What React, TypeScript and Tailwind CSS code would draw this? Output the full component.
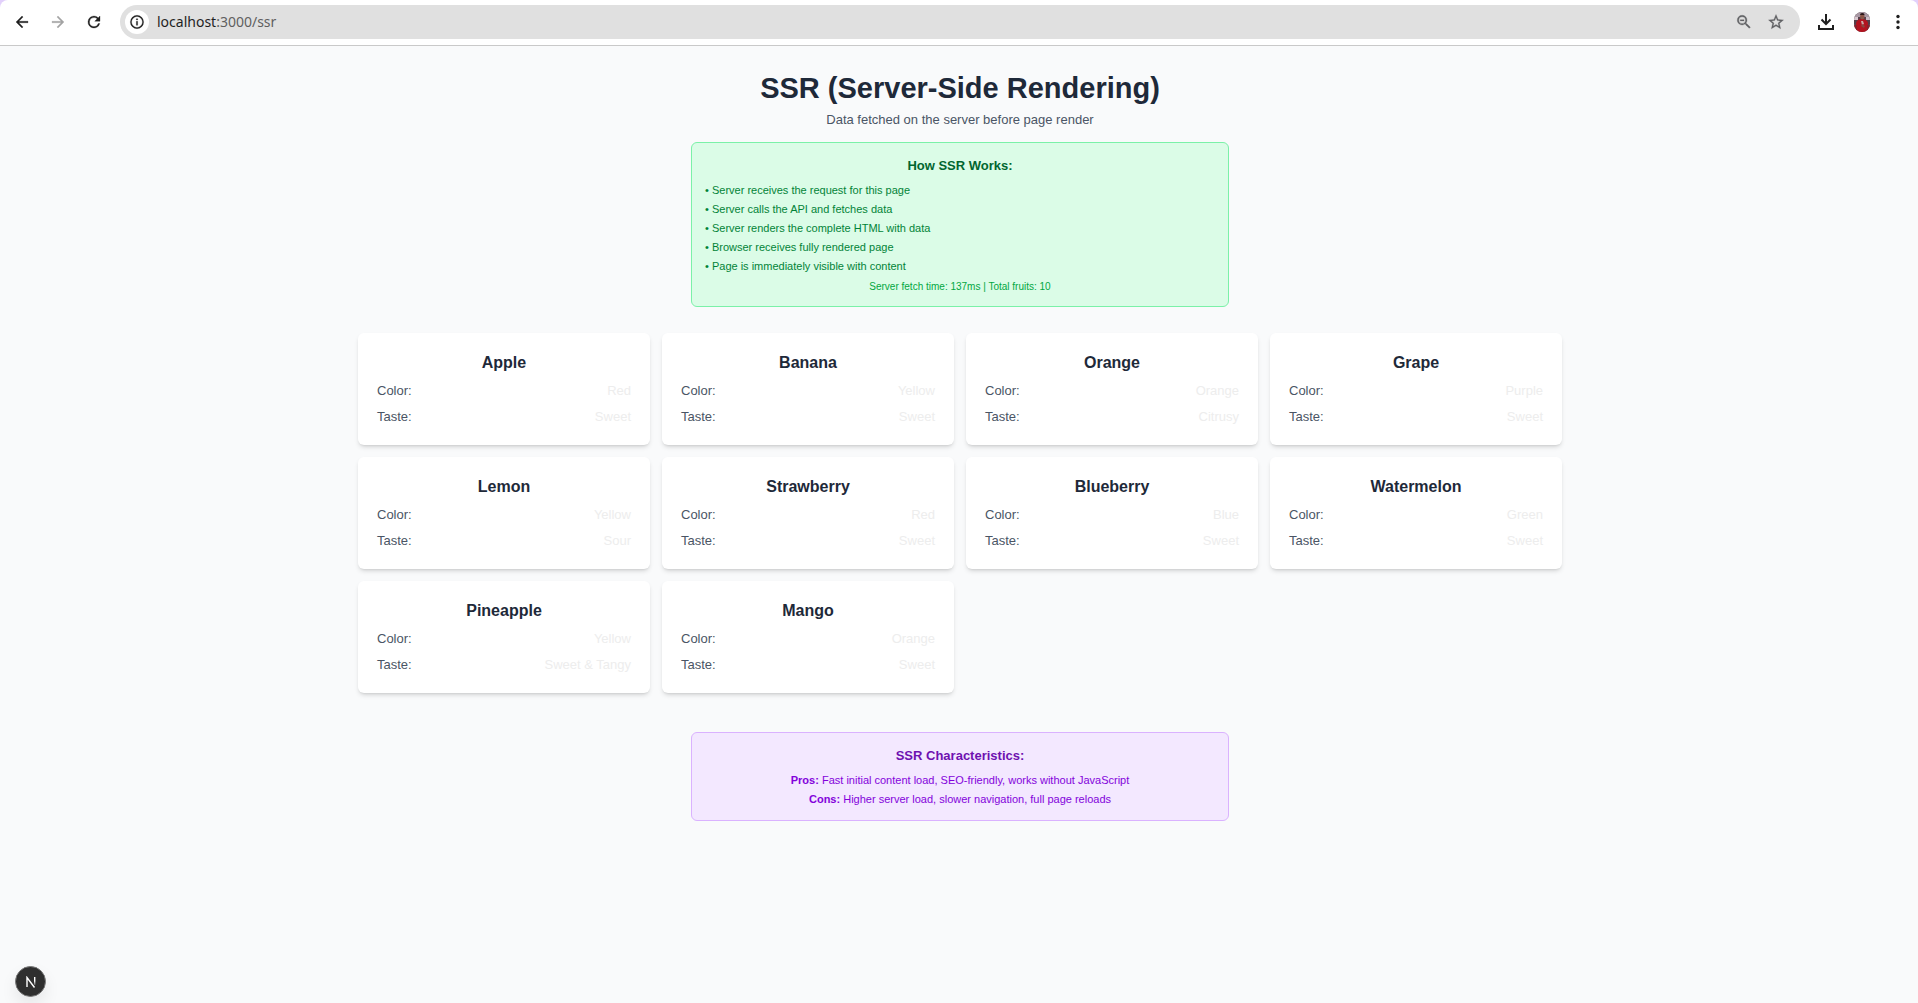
import React from "react";

const fruits = [
  ["Apple", "Red", "Sweet"],
  ["Banana", "Yellow", "Sweet"],
  ["Orange", "Orange", "Citrusy"],
  ["Grape", "Purple", "Sweet"],
  ["Lemon", "Yellow", "Sour"],
  ["Strawberry", "Red", "Sweet"],
  ["Blueberry", "Blue", "Sweet"],
  ["Watermelon", "Green", "Sweet"],
  ["Pineapple", "Yellow", "Sweet & Tangy"],
  ["Mango", "Orange", "Sweet"],
];

const steps = [
  "Server receives the request for this page",
  "Server calls the API and fetches data",
  "Server renders the complete HTML with data",
  "Browser receives fully rendered page",
  "Page is immediately visible with content",
];

function Icon({ d, className }: { d: string; className: string }) {
  return (
    <svg viewBox="0 0 24 24" fill="currentColor" stroke="currentColor" strokeWidth="0.4" className={className} aria-hidden="true">
      <path d={d} />
    </svg>
  );
}

function Avatar() {
  return (
    <svg viewBox="0 0 18 20" className="h-5 w-[18px]" aria-hidden="true">
      <defs>
        <clipPath id="avatar-clip">
          <rect x="1" width="16" height="20" rx="8" />
        </clipPath>
      </defs>
      <g clipPath="url(#avatar-clip)">
        <rect width="18" height="20" fill="#54404a" />
        <rect width="18" height="5" fill="#a898a3" />
        <rect y="5" width="5" height="3" fill="#d8c7cf" />
        <rect x="13" y="5" width="5" height="3" fill="#cbbcc6" />
        <path d="M3 20V11Q4 7 9 7T15 11V20Z" fill="#b3131f" />
        <path d="M0 13h4v7H0zM14 13h4v7h-4z" fill="#8c1f2a" />
        <ellipse cx="9.3" cy="4.5" rx="2.2" ry="3" fill="#8a5648" />
        <path d="M7 3Q7 1 9.300 1T11.600 3Z" fill="#2a1719" />
        <path d="M8 9l2 0 1 3-2 1z" fill="#c9a7a4" />
        <path d="M9 12l3 2-1 2-3-2z" fill="#8a4640" />
      </g>
    </svg>
  );
}

function Toolbar() {
  return (
    <div className="shrink-0 bg-[#e2d0fb]">
      <header className="flex h-[46px] items-center rounded-t-lg border-b border-[#c9c9c9] bg-white pb-px pl-3 pr-[10px] text-[#1f1f1f]">
        <button aria-label="Back" className="flex size-5 items-center justify-center">
          <Icon className="size-[18px]" d="M20 11H7.830l5.590-5.590L12 4l-8 8 8 8 1.410-1.410L7.830 13H20v-2z" />
        </button>
        <button aria-label="Forward" className="ml-4 flex size-5 items-center justify-center text-[#a3a3a3]">
          <Icon className="size-[18px]" d="M12 4l-1.410 1.410L16.170 11H4v2h12.170l-5.580 5.590L12 20l8-8z" />
        </button>
        <button aria-label="Reload" className="ml-4 flex size-5 items-center justify-center">
          <Icon
            className="size-[18px]"
            d="M17.650 6.350A7.958 7.958 0 0 0 12 4a8 8 0 1 0 7.730 10h-2.080A6 6 0 1 1 12 6c1.660 0 3.140.690 4.220 1.780L13 11h7V4l-2.350 2.350z"
          />
        </button>
        <div className="ml-4 flex h-[34px] flex-1 items-center rounded-full bg-[#e0e0e0] pl-[5px] pr-[14px]">
          <button aria-label="View site information" className="flex size-6 items-center justify-center rounded-full bg-white">
            <Icon
              className="size-4"
              d="M11 7h2v2h-2zm0 4h2v6h-2zm1-9a10 10 0 1 0 0 20 10 10 0 0 0 0-20zm0 18.200a8.200 8.200 0 1 1 0-16.400 8.200 8.200 0 0 1 0 16.400z"
            />
          </button>
          <a href="#" className="ml-2 font-['Noto_Sans',sans-serif] text-[14px] leading-5">
            localhost<span className="text-[#5f5f5f]">:3000/ssr</span>
          </a>
          <div className="ml-auto flex items-center gap-3 text-[#5f6063]">
            <button aria-label="Zoom" className="flex size-5 items-center justify-center">
              <Icon
                className="size-[18px]"
                d="M15.500 14h-.790l-.280-.270A6.471 6.471 0 0 0 16 9.500 6.500 6.500 0 1 0 9.500 16c1.610 0 3.090-.590 4.230-1.570l.270.280v.790l5 4.990L20.490 19l-4.990-5zm-6 0a4.500 4.500 0 1 1 0-9 4.500 4.500 0 0 1 0 9zM7 9h5v1.500H7z"
              />
            </button>
            <button aria-label="Bookmark this tab" className="flex size-5 items-center justify-center">
              <Icon
                className="size-[18px]"
                d="M22 9.240l-7.190-.620L12 2 9.190 8.630 2 9.240l5.460 4.730L5.820 21 12 17.270 18.180 21l-1.630-7.030L22 9.240zM12 15.400l-3.760 2.270 1-4.280-3.320-2.880 4.380-.380L12 6.100l1.710 4.040 4.380.380-3.320 2.880 1 4.280L12 15.400z"
              />
            </button>
          </div>
        </div>
        <button aria-label="Downloads" className="ml-4 flex size-5 items-center justify-center">
          <svg viewBox="0 0 20 20" className="size-5" fill="none" stroke="currentColor" strokeWidth="2" aria-hidden="true">
            <path d="M10 2v10M5.500 7.500L10 12 14.500 7.500M3 13v4h14v-4" />
          </svg>
        </button>
        <button aria-label="Profile" className="ml-4 flex size-5 items-center justify-center">
          <Avatar />
        </button>
        <button aria-label="Menu" className="ml-4 flex size-5 items-center justify-center">
          <svg viewBox="0 0 20 20" className="size-5" fill="currentColor" aria-hidden="true">
            <circle cx="10" cy="4.5" r="1.7" />
            <circle cx="10" cy="10" r="1.7" />
            <circle cx="10" cy="15.5" r="1.7" />
          </svg>
        </button>
      </header>
    </div>
  );
}

function FruitCard({ name, color, taste }: { name: string; color: string; taste: string }) {
  return (
    <article className="rounded-md bg-white p-[19px] shadow-[0_3px_5px_-1px_rgb(0_0_0/0.14),0_2px_3px_-2px_rgb(0_0_0/0.14)]">
      <h2 className="text-center text-[16px] font-bold leading-[22px] text-gray-800">{name}</h2>
      <dl className="mt-[7px] flex flex-col gap-[7px] text-[13px] leading-[19px]">
        <div className="flex justify-between">
          <dt className="text-gray-600">Color:</dt>
          <dd className="text-[#ededed]">{color}</dd>
        </div>
        <div className="flex justify-between">
          <dt className="text-gray-600">Taste:</dt>
          <dd className="text-[#ededed]">{taste}</dd>
        </div>
      </dl>
    </article>
  );
}

export default function App() {
  return (
    <div className="flex min-h-screen flex-col bg-gray-50 font-['Liberation_Sans',sans-serif]">
      <Toolbar />
      <main className="flex flex-col items-center pt-[26px] pr-3 pb-[26px] pl-[14px]">
        <h1 className="text-[29px] font-bold leading-8 text-gray-800">SSR (Server-Side Rendering)</h1>
        <p className="mt-[6px] text-[13px] leading-[19px] text-gray-600">Data fetched on the server before page render</p>

        <section className="mt-[13px] w-full max-w-[538px] rounded-md border border-green-300 bg-green-100 p-[13px]">
          <h2 className="text-center text-[13px] font-bold leading-[19px] text-green-800">How SSR Works:</h2>
          <ul className="mt-[7px] flex flex-col gap-[3px] text-[11px] leading-4 text-green-700">
            {steps.map((step) => (
              <li key={step}>• {step}</li>
            ))}
          </ul>
          <p className="mt-[6px] text-center text-[10px] leading-[13px] text-green-600">
            Server fetch time: 137ms | Total fruits: 10
          </p>
        </section>

        <div className="mt-[26px] grid w-full max-w-[1204px] grid-cols-1 gap-3 sm:grid-cols-2 lg:grid-cols-4">
          {fruits.map(([name, color, taste]) => (
            <FruitCard key={name} name={name} color={color} taste={taste} />
          ))}
        </div>

        <section className="mt-[39px] w-full max-w-[538px] rounded-md border border-purple-300 bg-purple-100 p-[13px] text-center">
          <h2 className="text-[13px] font-bold leading-[19px] text-purple-800">SSR Characteristics:</h2>
          <div className="mt-[7px] flex flex-col gap-[3px] text-[11px] leading-4 text-purple-700">
            <p>
              <strong>Pros:</strong> Fast initial content load, SEO-friendly, works without JavaScript
            </p>
            <p>
              <strong>Cons:</strong> Higher server load, slower navigation, full page reloads
            </p>
          </div>
        </section>
      </main>

      <button
        aria-label="Open Next.js Dev Tools"
        className="fixed bottom-[6px] left-[15px] flex size-[31px] items-center justify-center rounded-full border border-[#777] bg-[#2f2f2f] shadow-[0_8px_16px_rgb(0_0_0/0.08)]"
      >
        <svg viewBox="0 0 12 12" className="size-3" fill="none" strokeWidth="1.4" aria-hidden="true">
          <defs>
            <linearGradient id="n-stem" x1="0" y1="0" x2="0" y2="1">
              <stop offset="0.5" stopColor="#fff" />
              <stop offset="1" stopColor="#fff" stopOpacity="0.2" />
            </linearGradient>
          </defs>
          <path d="M2 11V1.500L9.500 11.500" stroke="#fff" />
          <rect x="9" y="1" width="1.4" height="8" fill="url(#n-stem)" />
        </svg>
      </button>
    </div>
  );
}
